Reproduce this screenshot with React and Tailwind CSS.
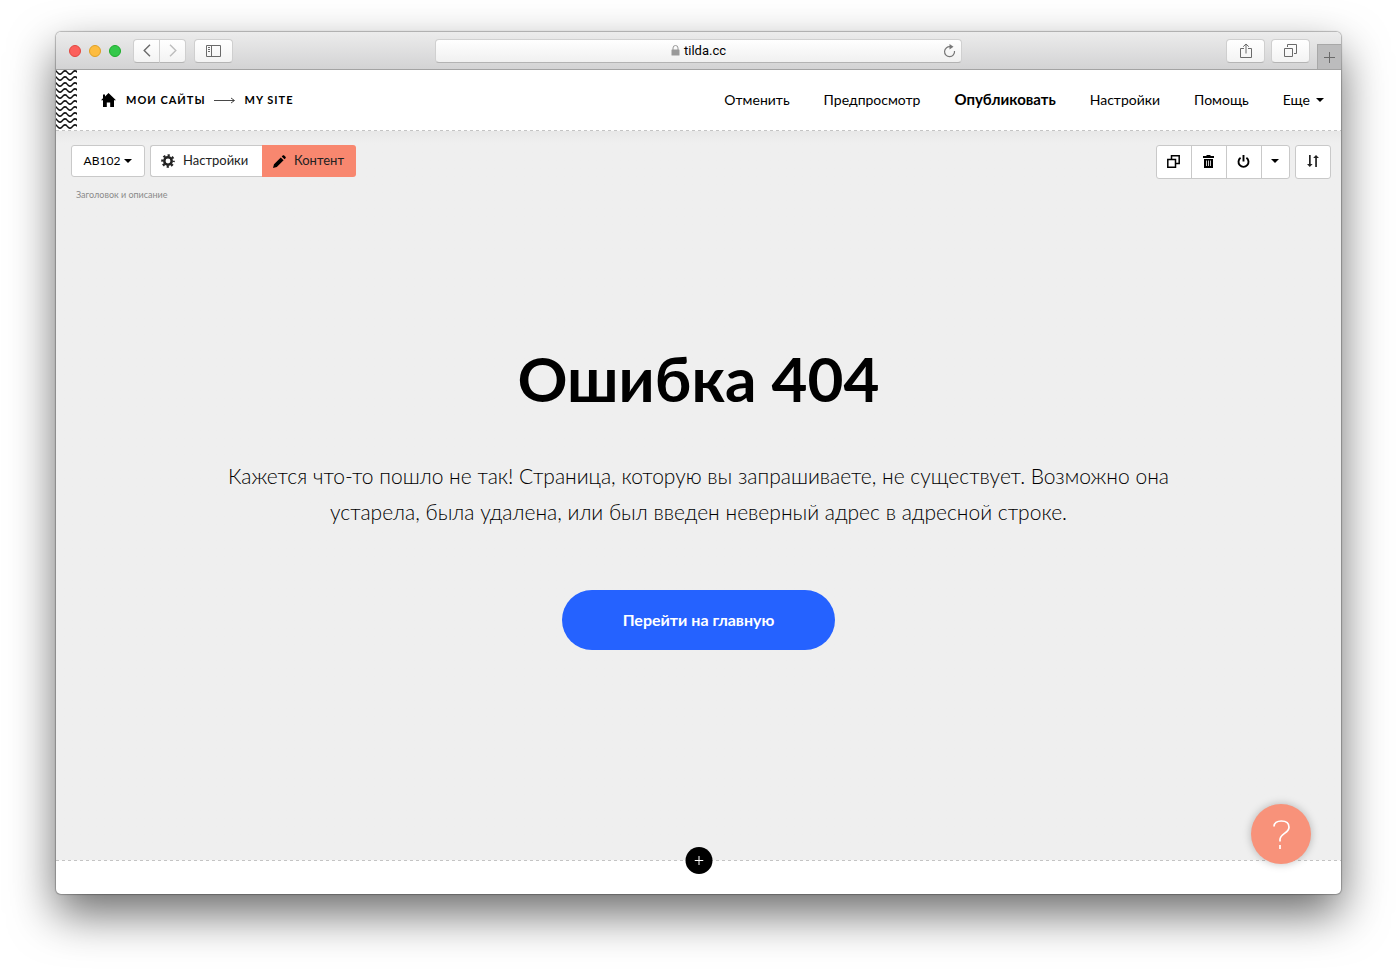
import { useId } from 'react'

const NAV = ['Отменить', 'Предпросмотр', 'Опубликовать', 'Настройки', 'Помощь']

function Caret() {
  return (
    <svg width="8" height="4" viewBox="0 0 8 4" className="shrink-0" aria-hidden="true">
      <path d="M0 0h8L4 4z" fill="currentColor" />
    </svg>
  )
}

function DashedLine() {
  return <div className="h-px bg-[repeating-linear-gradient(90deg,#c4c4c4_0_3px,#fafafa_3px_6px)]" />
}

function ChromeButton({ label, className = '', children }) {
  return (
    <button
      aria-label={label}
      className={`flex h-6 items-center justify-center border border-[#cfcfcf] border-b-[#b5b5b5] bg-linear-to-b from-white to-[#f3f3f3] text-[#6a6a6a] ${className}`}>
      {children}
    </button>
  )
}

function BrowserBar() {
  return (
    <div className="relative flex h-[38px] items-center justify-between rounded-t-[5px] border-b border-[#a3a3a3] bg-linear-to-b from-[#ececec] to-[#d3d3d4] pl-[13px]">
      {/* Window controls */}
      <div className="flex items-center">
        <div className="mr-3 flex gap-2">
          <span className="size-3 rounded-full border border-[#e2463f] bg-[#fc605c]" />
          <span className="size-3 rounded-full border border-[#dfa023] bg-[#fdbc40]" />
          <span className="size-3 rounded-full border border-[#1dad2b] bg-[#34c84a]" />
        </div>
        <ChromeButton label="Назад" className="w-[27px] rounded-l">
          <svg width="8" height="13" viewBox="0 0 8 13" fill="none" stroke="currentColor" strokeWidth="1.4">
            <path d="M7 .7 1.2 6.5 7 12.3" />
          </svg>
        </ChromeButton>
        <ChromeButton label="Вперёд" className="-ml-px w-[27px] rounded-r">
          <svg width="8" height="13" viewBox="0 0 8 13" fill="none" stroke="#bdbdbd" strokeWidth="1.4">
            <path d="M1 .7 6.8 6.5 1 12.3" />
          </svg>
        </ChromeButton>
        <ChromeButton label="Боковая панель" className="ml-2 w-[39px] rounded">
          <svg width="15" height="12" viewBox="0 0 15 12" fill="none" stroke="currentColor">
            <path d="M.5.5h14v11H.5zM5.5.5v11M2 2.5h2M2 4.5h2M2 6.5h2" />
          </svg>
        </ChromeButton>
      </div>

      {/* Address */}
      <div className="absolute inset-x-0 mx-auto flex h-6 w-[41%] items-center justify-center rounded border border-[#d0d0d0] border-b-[#b3b3b3] bg-linear-to-b from-white to-[#f0f0f0] font-['Roboto',sans-serif] text-[13px] text-black">
        <svg width="9" height="11" viewBox="0 0 9 11" className="mr-1" aria-hidden="true">
          <path d="M2 5V3a2.5 2.5 0 0 1 5 0v2" fill="none" stroke="#999" strokeWidth="1" />
          <rect x=".5" y="4.5" width="8" height="6" rx=".6" fill="#999" />
        </svg>
        tilda.cc
        <button aria-label="Обновить" className="absolute right-[5px] text-[#777]">
          <svg width="13" height="14" viewBox="0 0 13 14" fill="none" stroke="currentColor" strokeWidth="1.2">
            <path d="M7.500 2.800A5 5 0 1 0 11.500 7" />
            <path d="M6.500 0 10.500 2.800 6.500 5.400z" fill="currentColor" stroke="none" />
          </svg>
        </button>
      </div>

      <div className="flex items-center self-stretch">
        <ChromeButton label="Поделиться" className="w-[39px] rounded">
          <svg width="12" height="16" viewBox="0 0 12 16" fill="none" stroke="currentColor">
            <path d="M4 5.5H.5v9h11v-9H8M6 10.500V1M3.200 3.700 6 1l2.800 2.700" />
          </svg>
        </ChromeButton>
        <ChromeButton label="Вкладки" className="ml-1.5 w-[39px] rounded">
          <svg width="13" height="13" viewBox="0 0 13 13" fill="none" stroke="currentColor">
            <path d="M.5 4.500h8v8h-8zM3.500 3V.5h9v9H10" />
          </svg>
        </ChromeButton>
        <button
          aria-label="Новая вкладка"
          className="ml-[7px] flex h-[25px] w-6 items-center justify-center self-end border-t border-l border-[#a8a8a8] bg-[#bcbcbd] text-[#6a6a6a]">
          <svg width="11" height="11" viewBox="0 0 11 11" stroke="currentColor">
            <path d="M5.500 0v11M0 5.500h11" />
          </svg>
        </button>
      </div>
    </div>
  )
}

function Waves() {
  const id = useId()
  return (
    <svg className="w-[21px] shrink-0 self-stretch" aria-hidden="true">
      <defs>
        <pattern id={id} width="10" height="6" patternUnits="userSpaceOnUse">
          <g fill="none" stroke="#111" strokeWidth="1.5">
            <path d="M-1 0 2.200 3.200Q4 5 5.800 3.200L7.200 1.800Q9 0 10.800 1.800L12 3M-2.800 1.800Q-1 0 .8 1.800" />
            <path d="M-1 6 2.200 9.200Q4 11 5.800 9.200L7.200 7.800Q9 6 10.800 7.800" />
          </g>
        </pattern>
      </defs>
      <rect width="21" height="100%" fill={`url(#${id})`} />
    </svg>
  )
}

function Header() {
  return (
    <header className="bg-white text-black">
      <div className="flex h-[60px] items-center">
        <Waves />
        <nav className="ml-6 flex items-center text-[11px] font-bold tracking-[1px]">
          <a href="#home" aria-label="Главная" className="mr-2.5">
            <svg width="15" height="14" viewBox="0 0 15 14">
              <path d="M7.500 0 15 7.200h-2V14H9.200V9.500H5.800V14H2V7.200H0l2-1.900V1.500h2v1.900z" />
            </svg>
          </a>
          <a href="#sites">МОИ САЙТЫ</a>
          <svg width="21" height="7" viewBox="0 0 21 7" fill="none" stroke="#333" className="mr-2.5 ml-2" aria-hidden="true">
            <path d="M0 3.500h20M17 1l3.500 2.500L17 6" strokeWidth=".9" />
          </svg>
          <a href="#site">MY SITE</a>
        </nav>
        <nav className="mr-[17px] ml-auto flex items-center gap-[34px] pb-px text-[14px]">
          {NAV.map((item) => (
            <a key={item} href="#" className={item === 'Опубликовать' ? 'text-[15px] font-bold' : ''}>
              {item}
            </a>
          ))}
          <button className="flex items-center gap-1.5">
            Еще
            <Caret />
          </button>
        </nav>
      </div>
      <DashedLine />
    </header>
  )
}

function ToolButton({ label, className = 'w-[35px]', children }) {
  return (
    <button aria-label={label} className={`flex items-center justify-center pr-px pb-0.5 ${className}`}>
      {children}
    </button>
  )
}

function BlockToolbar() {
  return (
    <div className="flex items-start justify-between pt-3.5 pr-2.5 pl-[15px] text-left text-[13px] text-[#222]">
      <div>
        <div className="flex h-8 gap-[5px]">
          <button className="flex w-[74px] items-center justify-center gap-1 rounded-[3px] border border-[#c9c9c9] bg-white text-[12px] text-black">
            AB102
            <Caret />
          </button>
          <div className="flex">
            <button className="flex w-28 items-center gap-2 rounded-l-[3px] border border-r-0 border-[#c9c9c9] bg-white pl-2.5">
              <svg width="14" height="14" viewBox="0 0 14 14" fill="none" stroke="#222">
                <circle cx="7" cy="7" r="3.700" strokeWidth="2.500" />
                <circle cx="7" cy="7" r="5.700" strokeWidth="2.200" strokeDasharray="2.240 2.240" strokeDashoffset="1.120" />
              </svg>
              Настройки
            </button>
            <button className="flex w-[94px] items-center gap-2 rounded-r-[3px] bg-[#f8876f] pl-[11px]">
              <svg width="13" height="13" viewBox="0 0 13 13">
                <path d="M0 13 1 9.200 7.800 2.400l2.800 2.800L3.800 12zM8.700 1.500l1-1c.5-.5 1-.5 1.500 0l1.300 1.300c.5.5.5 1 0 1.500l-1 1z" />
              </svg>
              Контент
            </button>
          </div>
        </div>
        <p className="mt-3 ml-[5px] text-[9px] leading-3 text-[#8a8a8a]">Заголовок и описание</p>
      </div>

      <div className="flex h-[34px] gap-[5px] text-black">
        <div className="flex divide-x divide-[#c9c9c9] rounded-[3px] border border-[#c9c9c9] bg-white">
          <ToolButton label="Дублировать">
            <svg width="13" height="13" viewBox="0 0 13 13" fill="none" stroke="currentColor" strokeWidth="1.500">
              <path d="M.8 4.500h7.700v7.700H.8zM4.500 4V.8h7.700v7.700H9" />
            </svg>
          </ToolButton>
          <ToolButton label="Удалить">
            <svg width="11" height="13" viewBox="0 0 11 13">
              <path d="M3.500 0h4v1H11v2H0V1h3.500zM1 4h9v9H1z" />
              <path d="M3.500 5.500v5.500M5.500 5.500v5.500M7.500 5.500v5.500" stroke="#fff" strokeWidth=".8" />
            </svg>
          </ToolButton>
          <ToolButton label="Выключить">
            <svg width="13" height="13" viewBox="0 0 13 13" fill="none" stroke="currentColor" strokeWidth="1.900">
              <path d="M3.600 2.800a5 5 0 1 0 5.800 0M6.500 0v6.500" />
            </svg>
          </ToolButton>
          <ToolButton label="Ещё действия" className="w-[27px]">
            <Caret />
          </ToolButton>
        </div>
        <div className="flex rounded-[3px] border border-[#c9c9c9] bg-white">
          <ToolButton label="Переместить" className="w-[34px]">
            <svg width="12" height="12" viewBox="0 0 12 12" fill="#222">
              <path d="M2 0h1.700v9H5.600L2.800 12 0 9h2zM8.200 12h1.700V3H12L9 0 6.200 3h2z" />
            </svg>
          </ToolButton>
        </div>
      </div>
    </div>
  )
}

export default function App() {
  return (
    <div className="bg-white px-14 pt-8 pb-20 font-['Lato','Open_Sans',sans-serif]">
      <div className="relative rounded-[5px] bg-white shadow-[0_0_1px_1px_rgba(0,0,0,0.25),0_20px_46px_rgba(0,0,0,0.58)]">
        <BrowserBar />
        <Header />

        <main className="bg-linear-to-b from-[#e8e8e8] to-[#efefef] to-[12px] pb-[210px] text-center text-black">
          <BlockToolbar />
          <h1 className="mt-[137px] text-[62px] leading-[80px] font-bold">Ошибка 404</h1>
          <p className="mx-auto mt-10 max-w-[960px] text-[21px] leading-9 font-light">
            Кажется что-то пошло не так! Страница, которую вы запрашиваете, не существует. Возможно она устарела,
            была удалена, или был введен неверный адрес в адресной строке.
          </p>
          <a
            href="#"
            className="mx-auto mt-[60px] flex h-[60px] w-[273px] items-center justify-center rounded-full bg-[#2562ff] text-[16px] font-bold text-white">
            Перейти на главную
          </a>
        </main>

        <footer className="relative rounded-b-[5px] pb-[33px]">
          <DashedLine />
          <button
            aria-label="Добавить блок"
            className="absolute -top-[13px] left-1/2 flex size-[27px] -translate-x-1/2 items-center justify-center rounded-full bg-black">
            <svg width="9" height="9" viewBox="0 0 9 9" stroke="#fff">
              <path d="M4.500 0v9M0 4.500h9" />
            </svg>
          </button>
          <button
            aria-label="Помощь"
            className="absolute right-[30px] bottom-[30px] flex size-[60px] items-center justify-center rounded-full bg-[#f8927a] shadow-[0_0_8px_rgba(0,0,0,0.25)]">
            <svg width="17" height="29" viewBox="0 0 17 29" fill="none" stroke="#fff" strokeWidth="1.700">
              <path d="M1 6.500C1 3 4 1 8.300 1 13 1 16 3.300 16 7.200c0 6-9 6.300-9 12.300v2M7 25v4" />
            </svg>
          </button>
        </footer>
      </div>
    </div>
  )
}
